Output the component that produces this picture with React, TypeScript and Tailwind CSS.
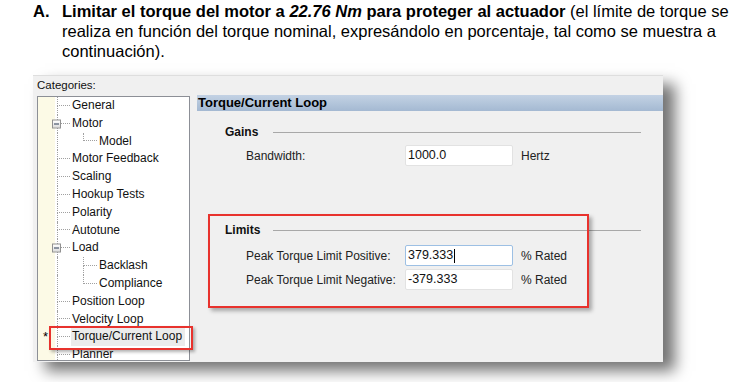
import React from 'react';

interface TreeRow {
  label: string;
  level: 1 | 2;
  expander?: boolean;
  last?: boolean;
  selected?: boolean;
  star?: boolean;
}

const rows: TreeRow[] = [
  { label: 'General', level: 1 },
  { label: 'Motor', level: 1, expander: true },
  { label: 'Model', level: 2, last: true },
  { label: 'Motor Feedback', level: 1 },
  { label: 'Scaling', level: 1 },
  { label: 'Hookup Tests', level: 1 },
  { label: 'Polarity', level: 1 },
  { label: 'Autotune', level: 1 },
  { label: 'Load', level: 1, expander: true },
  { label: 'Backlash', level: 2 },
  { label: 'Compliance', level: 2, last: true },
  { label: 'Position Loop', level: 1 },
  { label: 'Velocity Loop', level: 1 },
  { label: 'Torque/Current Loop', level: 1, selected: true, star: true },
  { label: 'Planner', level: 1 },
];

const ui = "font-['Liberation_Sans',Arial,sans-serif]";

const Expander = () => (
  <div className="absolute left-[-5px] top-1/2 -translate-y-1/2 flex h-[9px] w-[9px] items-center justify-center border border-[#919191] bg-[linear-gradient(to_bottom,#ffffff,#dcdcdc)]">
    <div className="h-[1px] w-[5px] bg-[#2b3a55]" />
  </div>
);

const Row = ({ row }: { row: TreeRow }) => (
  <div className="flex h-[17.8px] items-stretch">
    <div className="w-[19px] shrink-0 pl-[5px] text-[13px] leading-[17.8px] text-black">
      {row.star ? '*' : ''}
    </div>
    {row.level === 1 ? (
      <div className="relative flex w-[13px] shrink-0 flex-col">
        <div className="h-1/2 border-b border-l border-dotted border-[#a0a0a0]" />
        <div className="h-1/2 border-l border-dotted border-[#a0a0a0]" />
        {row.expander && <Expander />}
      </div>
    ) : (
      <>
        <div className="w-[26px] shrink-0 border-l border-dotted border-[#a0a0a0]" />
        <div className="flex w-[14px] shrink-0 flex-col">
          <div className="h-1/2 border-b border-l border-dotted border-[#a0a0a0]" />
          <div className={row.last ? 'h-1/2' : 'h-1/2 border-l border-dotted border-[#a0a0a0]'} />
        </div>
      </>
    )}
    <span
      className={`ml-[1px] whitespace-nowrap px-[1px] text-[12px] leading-[17.8px] text-[#111] ${
        row.selected ? 'bg-[#ebebeb] pr-[3px]' : ''
      }`}
    >
      {row.label}
    </span>
  </div>
);

const Field = ({ value, focused, caret }: { value: string; focused?: boolean; caret?: boolean }) => (
  <div
    className={`flex h-[21px] w-[108px] items-center rounded-[2px] border bg-white pl-[2px] text-[12.5px] text-[#111] ${
      focused ? 'border-[#9dc0e4]' : 'border-[#e2e2e2]'
    }`}
  >
    {value}
    {caret && <span className="ml-[1px] h-[14px] w-[1px] bg-black" />}
  </div>
);

const GroupTitle = ({ title }: { title: string }) => (
  <div className="flex h-[16px] items-center">
    <span className="w-[48px] text-[12px] font-bold text-[#111]">{title}</span>
    <div className="h-[1px] flex-1 bg-[#a8a8a8]" />
  </div>
);

export default function App() {
  return (
    <div className="h-[382px] w-[736px] overflow-hidden bg-white">
      {/* Instruction text */}
      <div className="flex pl-[33px] pt-[1px] font-['Liberation_Sans',Arial,sans-serif] text-[16.5px] leading-[20px] text-black">
        <span className="w-[29px] shrink-0 font-bold">A.</span>
        <p className="whitespace-nowrap">
          <b>
            Limitar el torque del motor a <i>22.76 Nm</i> para proteger al actuador
          </b>{' '}
          (el límite de torque se
          <br />
          realiza en función del torque nominal, expresándolo en porcentaje, tal como se muestra a
          <br />
          continuación).
        </p>
      </div>

      {/* Dialog screenshot */}
      <div
        className={`relative ml-[33px] mt-[14px] flex h-[287px] w-[630px] border-t border-[#dedede] bg-[#f0f0f0] shadow-[12px_9px_14px_rgba(0,0,0,0.55)] ${ui}`}
      >
        {/* Categories */}
        <div className="flex w-[157px] shrink-0 flex-col pl-[4px]">
          <div className="flex h-[20px] items-center text-[11.5px] text-[#111]">Categories:</div>
          <div className="mb-[1px] flex-1 overflow-hidden border border-[#8c8f96] bg-[linear-gradient(to_right,#fcfae6_17px,#ffffff_17px)]">
            {rows.map((r) => (
              <Row key={r.label} row={r} />
            ))}
          </div>
        </div>

        {/* Settings panel */}
        <div className="ml-[7px] flex flex-1 flex-col pt-[19px]">
          <div className="flex h-[16px] items-center bg-[linear-gradient(to_bottom,#c3d2e4,#a4b9d2)] pl-[1px] text-[13px] font-bold text-black">
            Torque/Current Loop
          </div>

          <div className="pl-[28px] pr-[22px]">
            <div className="mt-[13px]">
              <GroupTitle title="Gains" />
            </div>
            <div className="mt-[5px] flex items-center pl-[21px] text-[12px] text-[#222]">
              <span className="w-[159px]">Bandwidth:</span>
              <Field value="1000.0" />
              <span className="ml-[8px]">Hertz</span>
            </div>

            <div className="mt-[56px]">
              <GroupTitle title="Limits" />
            </div>
            <div className="mt-[7px] flex flex-col gap-[3px] pl-[21px] text-[12px] text-[#222]">
              <div className="flex items-center">
                <span className="w-[159px]">Peak Torque Limit Positive:</span>
                <Field value="379.333" focused caret />
                <span className="ml-[8px]">% Rated</span>
              </div>
              <div className="flex items-center">
                <span className="w-[159px]">Peak Torque Limit Negative:</span>
                <Field value="-379.333" />
                <span className="ml-[8px]">% Rated</span>
              </div>
            </div>
          </div>
        </div>

        {/* Red annotation boxes */}
        <div className="absolute left-[16px] top-[250px] h-[24px] w-[144px] border-2 border-[#e8322d] shadow-[2px_2px_3px_rgba(0,0,0,0.3)]" />
        <div className="absolute left-[175px] top-[138px] h-[94px] w-[381px] border-2 border-[#e8322d] shadow-[3px_3px_4px_rgba(0,0,0,0.3)]" />
      </div>
    </div>
  );
}
